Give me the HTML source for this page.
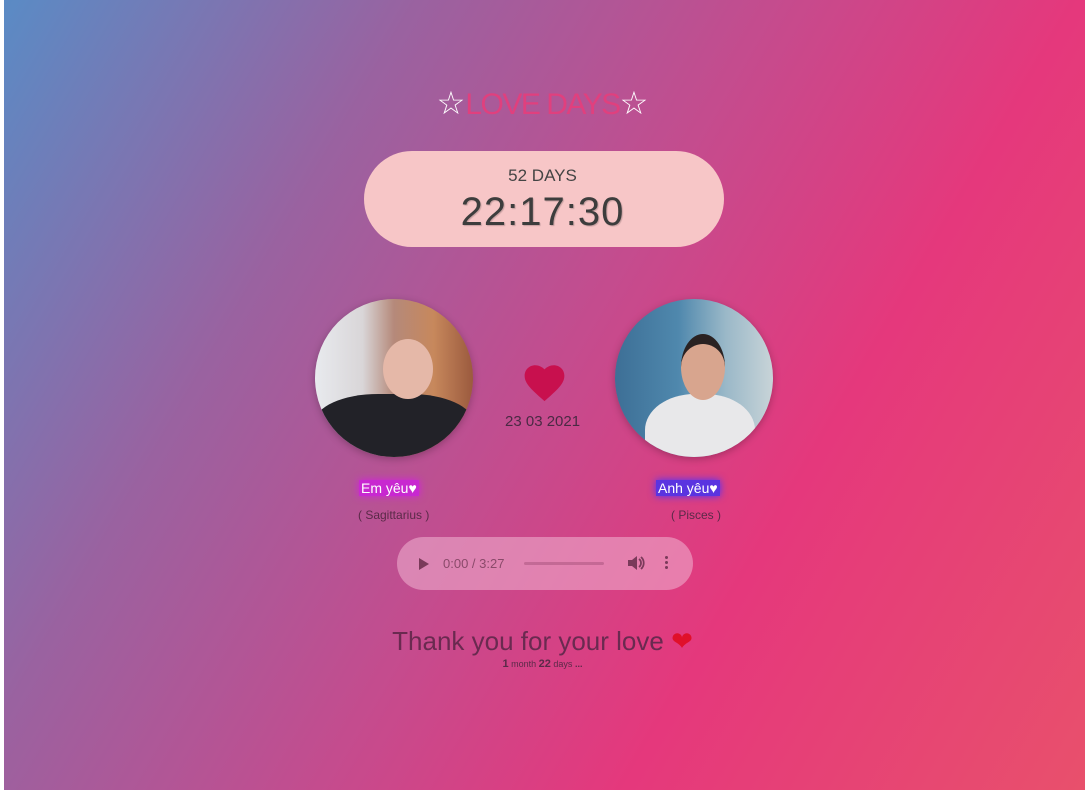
<!DOCTYPE html>
<html><head><meta charset="utf-8"><style>
html,body{margin:0;padding:0;width:1085px;height:792px;overflow:hidden;background:#fff;font-family:"Liberation Sans",sans-serif}
.bg{position:absolute;left:4px;top:0;width:1081px;height:790px;background:linear-gradient(120deg,#5a8bc5 0%,#9a62a0 27%,#c44c8e 50%,#e5387c 70%,#e8506c 100%)}
.t{position:absolute;left:0;width:1085px;text-align:center}
.ttl{top:84px;font-size:30px;color:#e0407e;letter-spacing:-1.5px;font-weight:300}
.star{color:#fff;font-size:32px;letter-spacing:0}
.pill{position:absolute;left:364px;top:151px;width:360px;height:96px;border-radius:48px;background:#f7c6c7}
.c{position:absolute;width:158px;height:158px;border-radius:50%;box-shadow:0 2px 8px rgba(0,0,0,.25);overflow:hidden}
.lbl{position:absolute;font-size:14px;color:#fff;padding:0 2px}
.sub{position:absolute;font-size:12px;color:#5a2a48}
.aud{position:absolute;left:397px;top:537px;width:296px;height:53px;border-radius:27px;background:rgba(240,180,210,.55)}
</style></head><body>
<div class="bg"></div>
<div class="t ttl"><span class="star">☆</span>LOVE DAYS<span class="star">☆</span></div>
<div class="pill"></div>
<div class="t" style="top:166px;font-size:17px;color:#444">52 DAYS</div>
<div class="t" style="top:190px;font-size:40px;color:#3d3d3d;letter-spacing:1px;text-shadow:1px 1px 1px rgba(0,0,0,.2)">22:17:30</div>
<div class="c" style="left:315px;top:299px;background:linear-gradient(90deg,#e8eaee 0%,#d9d6d8 30%,#b5897a 50%,#c7885c 75%,#9b5a3e 100%)">
 <div style="position:absolute;left:0;top:95px;width:158px;height:70px;background:#222228;border-radius:40% 40% 0 0"></div>
 <div style="position:absolute;left:68px;top:40px;width:50px;height:60px;background:#e5b8a8;border-radius:50%"></div>
</div>
<div class="c" style="left:615px;top:299px;background:linear-gradient(90deg,#3d6f96 0%,#4f88ad 40%,#9ab8c8 70%,#c8d4d8 100%)">
 <div style="position:absolute;left:30px;top:95px;width:110px;height:80px;background:#e8e8ea;border-radius:45% 45% 0 0"></div>
 <div style="position:absolute;left:66px;top:35px;width:44px;height:56px;background:#d8a58e;border-radius:50%;border-top:10px solid #2a2222"></div>
</div>
<svg style="position:absolute;left:523px;top:364px" width="43" height="38" viewBox="0 0 24 22"><path d="M12 21.5 L10.3 20 C4.2 14.5 0.5 11.2 0.5 6.8 0.5 3.3 3.2 0.7 6.6 0.7 8.6 0.7 10.6 1.6 12 3.1 13.4 1.6 15.4 0.7 17.4 0.7 20.8 0.7 23.5 3.3 23.5 6.8 23.5 11.2 19.8 14.5 13.7 20Z" fill="#c8104e"/></svg>
<div style="position:absolute;left:505px;top:413px;font-size:15px;color:#4a2a44">23 03 2021</div>
<div class="lbl" style="left:359px;top:480px;background:#c828d0;box-shadow:0 0 8px #d020e0">Em yêu♥</div>
<div class="lbl" style="left:656px;top:480px;background:#5a34e0;box-shadow:0 0 8px #4a30ff">Anh yêu♥</div>
<div class="sub" style="left:358px;top:508px">( Sagittarius )</div>
<div class="sub" style="left:671px;top:508px">( Pisces )</div>
<div class="aud">
 <svg style="position:absolute;left:21px;top:20px" width="12" height="14"><path d="M1 1 L11 7 L1 13Z" fill="#7a3a5a"/></svg>
 <div style="position:absolute;left:46px;top:19px;font-size:13px;color:#8a4a6a">0:00 / 3:27</div>
 <div style="position:absolute;left:127px;top:25px;width:80px;height:3px;background:rgba(140,60,100,.35);border-radius:2px"></div>
 <svg style="position:absolute;left:230px;top:18px" width="18" height="16" viewBox="0 0 18 16"><path d="M1 5h4l5-4v14l-5-4H1z" fill="#7a3a5a"/><path d="M12 4a5 5 0 0 1 0 8M14 2a8 8 0 0 1 0 12" stroke="#7a3a5a" stroke-width="1.8" fill="none"/></svg>
 <div style="position:absolute;left:268px;top:19px;width:3px;height:3px;border-radius:2px;background:#7a3a5a;box-shadow:0 5px 0 #7a3a5a,0 10px 0 #7a3a5a"></div>
</div>
<div class="t" style="top:626px;font-size:26px;color:#6a2a50;font-weight:300">Thank you for your love <span style="color:#e0102a">❤</span></div>
<div class="t" style="top:658px;font-size:9px;color:#5a2a48"><b style="font-size:11px">1</b> month <b style="font-size:11px">22</b> days <b>...</b></div>
</body></html>
